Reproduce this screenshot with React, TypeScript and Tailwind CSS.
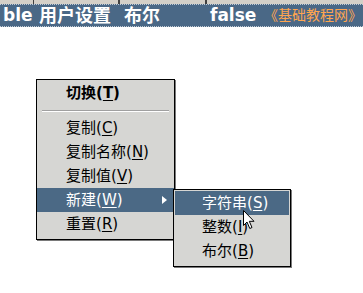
import React from "react";

const font = { fontFamily: '"DejaVu Sans", "Noto Sans CJK SC", sans-serif' };

function Item({ label, k, hl, bold, arrow }: { label: string; k: string; hl?: boolean; bold?: boolean; arrow?: boolean }) {
  return (
    <div className={`relative flex h-[24px] items-center pl-[29px] text-[15px] ${hl ? "bg-[#4b6985] text-white" : "text-black"} ${bold ? "font-bold" : ""}`}>
      <span>
        {label}(<span className="underline underline-offset-2">{k}</span>)
      </span>
      {arrow && (
        <svg className="absolute right-[7px] top-[8px]" width="5" height="8" viewBox="0 0 5 8">
          <path d="M0 0 L5 4 L0 8 Z" fill="white" />
        </svg>
      )}
    </div>
  );
}

function SubItem({ label, k, hl }: { label: string; k: string; hl?: boolean }) {
  return (
    <div className={`flex h-[24px] items-center pl-[27px] text-[15px] ${hl ? "bg-[#4b6985] text-white" : "text-black"}`}>
      <span>
        {label}(<span className="underline underline-offset-2">{k}</span>)
      </span>
    </div>
  );
}

export default function App() {
  return (
    <div className="relative h-[293px] w-[363px] overflow-hidden bg-white" style={font}>
      {/* header strip */}
      <div className="flex h-[4px] bg-[#d4d0c8]">
        <div className="w-[34px] border-r border-[#404040]" />
        <div className="w-[86px] border-r-2 border-[#404040]" />
        <div className="w-[87px] border-r-2 border-[#404040]" />
        <div className="flex-1" />
      </div>
      {/* blue row */}
      <div className="flex h-[23px] items-center whitespace-nowrap border-y border-dotted border-[#c0cad4] bg-[#4a6886] text-[17px] font-semibold text-white">
        <span className="ml-[3px] w-[36px]">ble</span>
        <span className="w-[85px] text-[18px]">用户设置</span>
        <span className="w-[86px] text-[18px]">布尔</span>
        <span>false</span>
        <span className="ml-auto mr-[1px] text-[14px] font-normal text-[#ffa54f]">《基础教程网》</span>
      </div>

      {/* main context menu */}
      <div className="absolute left-[36px] top-[79px] flex w-[139px] flex-col border border-black bg-[#d6d6d3] pt-[1px] shadow-[1px_1px_0_#7a7a7a]">
        <Item label="切换" k="T" bold />
        <div className="flex h-[11px] items-center px-[5px]">
          <div className="h-[1px] w-full bg-[#a0a0a0] shadow-[0_1px_0_#ffffff]" />
        </div>
        <Item label="复制" k="C" />
        <Item label="复制名称" k="N" />
        <Item label="复制值" k="V" />
        <Item label="新建" k="W" hl arrow />
        <Item label="重置" k="R" />
        <div className="h-[3px]" />
      </div>

      {/* submenu */}
      <div className="absolute left-[173px] top-[189px] flex w-[118px] flex-col border border-black bg-[#d6d6d3] p-[1px] shadow-[1px_1px_0_#7a7a7a]">
        <SubItem label="字符串" k="S" hl />
        <SubItem label="整数" k="I" />
        <SubItem label="布尔" k="B" />
        <div className="h-[2px]" />
      </div>

      {/* cursor */}
      <svg className="absolute left-[243px] top-[210px]" width="14" height="20" viewBox="0 0 14 20">
        <path d="M0.5 0.5 L0.5 15.5 L4 12 L6.8 18.5 L9 17.5 L6.3 11.3 L11 11.3 Z" fill="white" stroke="black" strokeWidth="1" />
      </svg>
    </div>
  );
}
